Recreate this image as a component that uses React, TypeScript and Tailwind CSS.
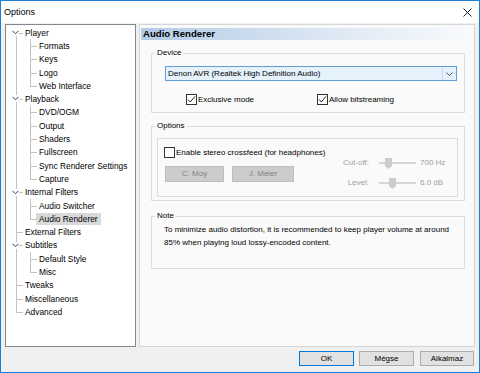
import React from 'react';

type TreeNode = { label: string; children?: string[] };

const tree: TreeNode[] = [
  { label: 'Player', children: ['Formats', 'Keys', 'Logo', 'Web Interface'] },
  { label: 'Playback', children: ['DVD/OGM', 'Output', 'Shaders', 'Fullscreen', 'Sync Renderer Settings', 'Capture'] },
  { label: 'Internal Filters', children: ['Audio Switcher', 'Audio Renderer'] },
  { label: 'External Filters' },
  { label: 'Subtitles', children: ['Default Style', 'Misc'] },
  { label: 'Tweaks' },
  { label: 'Miscellaneous' },
  { label: 'Advanced' },
];

interface Row {
  label: string;
  level: 0 | 1;
  expandable: boolean;
  firstRoot: boolean;
  lastRoot: boolean;
  lastChild: boolean;
  selected: boolean;
}

const rows: Row[] = [];
tree.forEach((node, i) => {
  rows.push({
    label: node.label,
    level: 0,
    expandable: !!node.children,
    firstRoot: i === 0,
    lastRoot: i === tree.length - 1,
    lastChild: false,
    selected: false,
  });
  node.children?.forEach((c, j) => {
    rows.push({
      label: c,
      level: 1,
      expandable: false,
      firstRoot: false,
      lastRoot: false,
      lastChild: j === node.children!.length - 1,
      selected: c === 'Audio Renderer',
    });
  });
});

const TreeRow = ({ row }: { row: Row }) => {
  const line = 'absolute w-px bg-[#c2c2c2]';
  return (
    <div className="relative h-[13.3px] flex items-center">
      {/* root level connector */}
      {row.level === 0 ? (
        row.firstRoot ? (
          <div className={`${line} left-[10px] top-1/2 bottom-0`} />
        ) : row.lastRoot ? (
          <div className={`${line} left-[10px] top-0 h-1/2`} />
        ) : (
          <div className={`${line} left-[10px] top-0 bottom-0`} />
        )
      ) : (
        <div className={`${line} left-[10px] top-0 bottom-0`} />
      )}
      {row.level === 1 &&
        (row.lastChild ? (
          <div className={`${line} left-[24px] top-0 h-1/2`} />
        ) : (
          <div className={`${line} left-[24px] top-0 bottom-0`} />
        ))}
      <div
        className={`absolute top-1/2 h-px w-[7px] bg-[#c2c2c2] ${row.level === 0 ? 'left-[10px]' : 'left-[24px]'}`}
      />
      {row.expandable && (
        <div className="absolute left-[5px] top-[3px] w-[8px] h-[7px] bg-white flex items-center justify-center">
          <svg width="7" height="5" viewBox="0 0 7 5">
            <polyline points="0.5,0.8 3.5,3.8 6.5,0.8" fill="none" stroke="#3c3c3c" strokeWidth="1" />
          </svg>
        </div>
      )}
      <span
        className={`relative h-[12px] leading-[12px] px-[3px] whitespace-nowrap ${
          row.level === 0 ? 'ml-[16px]' : 'ml-[30px]'
        } ${row.selected ? 'bg-[#d9d9d9]' : ''}`}
      >
        {row.label}
      </span>
    </div>
  );
};

const CheckBox = ({ checked, label }: { checked?: boolean; label: string }) => (
  <div className="flex items-center h-[11px]">
    <div className="w-[11px] h-[11px] border border-[#333333] bg-white flex items-center justify-center">
      {checked && (
        <svg width="9" height="9" viewBox="0 0 9 9">
          <polyline points="1,4.5 3.3,7 8,1.3" fill="none" stroke="#222222" strokeWidth="1" />
        </svg>
      )}
    </div>
    <span className="ml-[1px] leading-[11px] whitespace-nowrap">{label}</span>
  </div>
);

const GroupBox = ({ title, className, children }: { title: string; className: string; children: React.ReactNode }) => (
  <div className={`relative border border-[#dcdcdc] ${className}`}>
    <span className="absolute left-[3px] top-[-7px] px-[2px] bg-[#fafafa] leading-[12px]">{title}</span>
    {children}
  </div>
);

const SliderRow = ({ label, value, thumb }: { label: string; value: string; thumb: number }) => (
  <div className="flex items-center h-[12px] text-[#a0a0a0]">
    <span className="w-[40px] text-right whitespace-nowrap">{label}</span>
    <div className="relative ml-[10px] w-[37px] h-[12px]">
      <div className="absolute left-0 right-0 top-[5px] h-[2px] bg-[#d6d6d6]" />
      <svg className="absolute top-[1px]" style={{ left: thumb }} width="7" height="11" viewBox="0 0 7 11">
        <path d="M0 0 H7 V8 L3.5 11 L0 8 Z" fill="#cccccc" />
      </svg>
    </div>
    <span className="ml-[4px] whitespace-nowrap">{value}</span>
  </div>
);

const DialogButton = ({ label, primary, className }: { label: string; primary?: boolean; className: string }) => (
  <button
    className={`${className} block h-[15px] bg-[#e1e1e1] border text-[8px] leading-[13px] text-black text-center ${
      primary ? 'border-[#0078d7]' : 'border-[#adadad]'
    }`}
  >
    {label}
  </button>
);

export default function App() {
  return (
    <div className="w-[480px] h-[373px] border border-[#1c7fd6] bg-[#f0f0f0] flex flex-col font-['Liberation_Sans',Arial,sans-serif] text-black overflow-hidden">
      {/* Title bar */}
      <div className="h-[22px] bg-white flex items-center justify-between shrink-0">
        <span className="ml-[3px] text-[9px] leading-[12px]">Options</span>
        <svg className="mr-[7px]" width="9" height="9" viewBox="0 0 9 9">
          <path d="M0.5 0.5 L8.5 8.5 M8.5 0.5 L0.5 8.5" stroke="#222222" strokeWidth="1" />
        </svg>
      </div>

      <div className="flex mt-[1px] ml-[4px] h-[323px] shrink-0">
        {/* Tree */}
        <div className="w-[131px] h-full border border-[#828790] bg-white pt-[1px] text-[8.4px]">
          {rows.map(r => (
            <TreeRow key={r.label} row={r} />
          ))}
        </div>

        {/* Page */}
        <div className="ml-[3px] w-[336px] h-full border border-[#d5d5d5] bg-[#fafafa] px-[1px] pt-[3px] text-[8px]">
          <div className="h-[12px] bg-linear-to-r from-[#b2cbe6] via-[#d8e4f2] to-[#f9fbfd] flex items-center">
            <span className="ml-[2px] text-[9.6px] font-bold leading-[12px]">Audio Renderer</span>
          </div>

          <GroupBox title="Device" className="mt-[13px] ml-[10px] w-[314px] h-[60px]">
            <div className="mt-[12px] ml-[13px] w-[292px] h-[15px] border border-[#5f9ed9] bg-[#e5f1fb] flex items-center">
              <span className="ml-[2px] flex-1 leading-[11px] whitespace-nowrap">Denon AVR (Realtek High Definition Audio)</span>
              <div className="w-px h-[13px] bg-[#c5dbf0]" />
              <div className="w-[13px] flex items-center justify-center">
                <svg width="7" height="4" viewBox="0 0 7 4">
                  <polyline points="0.5,0.5 3.5,3.5 6.5,0.5" fill="none" stroke="#555555" strokeWidth="1" />
                </svg>
              </div>
            </div>
            <div className="mt-[13px] flex">
              <div className="ml-[34px] w-[131px]">
                <CheckBox checked label="Exclusive mode" />
              </div>
              <CheckBox checked label="Allow bitstreaming" />
            </div>
          </GroupBox>

          <GroupBox title="Options" className="mt-[13px] ml-[10px] w-[314px] h-[75px]">
            <div className="mt-[11px] ml-[5px] w-[301px] h-[59px] border border-[#dcdcdc] flex">
              <div className="w-[171px] pl-[6px] pt-[8px]">
                <CheckBox label="Enable stereo crossfeed (for headphones)" />
                <div className="flex mt-[8px] ml-[1px] gap-[8px]">
                  <div className="w-[59px] h-[16px] bg-[#cccccc] border border-[#bfbfbf] text-[#838383] flex items-center justify-center">
                    C. Moy
                  </div>
                  <div className="w-[62px] h-[16px] bg-[#cccccc] border border-[#bfbfbf] text-[#838383] flex items-center justify-center">
                    J. Meier
                  </div>
                </div>
              </div>
              <div className="pt-[18px] flex flex-col gap-[8px]">
                <SliderRow label="Cut-off:" value="700 Hz" thumb={6} />
                <SliderRow label="Level:" value="6.0 dB" thumb={10} />
              </div>
            </div>
          </GroupBox>

          <GroupBox title="Note" className="mt-[15px] ml-[10px] w-[314px] h-[53px]">
            <p className="pl-[12px] pt-[7px] leading-[12.7px]">
              To minimize audio distortion, it is recommended to keep player volume at around
              <br />
              85% when playing loud lossy-encoded content.
            </p>
          </GroupBox>
        </div>
      </div>

      {/* Buttons */}
      <div className="flex items-start justify-end mt-[4px] mr-[5px]">
        <DialogButton primary label="OK" className="w-[55px]" />
        <DialogButton label="Mégse" className="w-[55px] ml-[5px]" />
        <DialogButton label="Alkalmaz" className="w-[54px] ml-[6px]" />
      </div>
    </div>
  );
}
